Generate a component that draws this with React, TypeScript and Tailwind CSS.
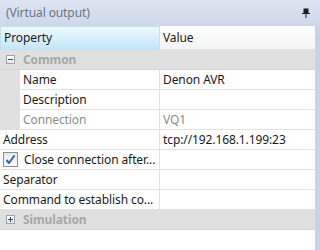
const font = { fontFamily: '"Noto Sans", "Open Sans", sans-serif' };

type Row = {
  name: string;
  value?: string;
  sub?: boolean;
  dim?: boolean;
  check?: boolean;
};

const commonRows: Row[] = [
  { name: "Name", value: "Denon AVR" },
  { name: "Description" },
  { name: "Connection", value: "VQ1", dim: true },
];

const rootRows: Row[] = [
  { name: "Address", value: "tcp://192.168.1.199:23" },
  { name: "Close connection after...", check: true },
  { name: "Separator" },
  { name: "Command to establish co..." },
];

function PinIcon() {
  return (
    <svg width="8" height="10" viewBox="0 0 8 10" className="text-[#1e1e1e]">
      <rect x="1.5" y="0.5" width="5" height="5" fill="currentColor" />
      <rect x="0" y="5" width="8" height="1" fill="currentColor" />
      <rect x="3.5" y="6" width="1" height="4" fill="currentColor" />
    </svg>
  );
}

function ExpandBox({ open }: { open: boolean }) {
  return (
    <span className="flex h-[9px] w-[9px] items-center justify-center border border-[#9fa4ab] bg-gradient-to-b from-white to-[#e6e6e6]">
      <svg width="7" height="7" viewBox="0 0 7 7">
        <rect x="1" y="3" width="5" height="1" fill="#3c4a66" />
        {!open && <rect x="3" y="1" width="1" height="5" fill="#3c4a66" />}
      </svg>
    </span>
  );
}

function CheckBox() {
  return (
    <span className="flex h-[15px] w-[15px] items-center justify-center border border-[#8e8f8f] bg-gradient-to-b from-[#e9e9e9] to-white">
      <svg width="11" height="11" viewBox="0 0 11 11">
        <path
          d="M1.5 6 L4 9 L9.5 1.5"
          fill="none"
          stroke="#3163a5"
          strokeWidth="2"
          strokeLinejoin="round"
        />
      </svg>
    </span>
  );
}

function PropRow({ row }: { row: Row }) {
  const tone = row.dim ? "text-[#8c8c8c]" : "text-[#1b1b1b]";
  return (
    <div className="flex h-[20px]">
      {row.sub && <div className="w-[20px] bg-[#e0e0e0]" />}
      <div
        className={`flex items-center border-b border-r border-[#e2e2e2] pl-[3px] ${
          row.sub ? "w-[140px]" : "w-[160px]"
        } ${tone}`}
      >
        {row.check && (
          <span className="mr-[6px]">
            <CheckBox />
          </span>
        )}
        <span className="whitespace-nowrap">{row.name}</span>
      </div>
      <div className={`flex flex-1 items-center border-b border-[#e2e2e2] pl-[3px] ${tone}`}>
        {row.value}
      </div>
    </div>
  );
}

function Category({ label, open }: { label: string; open: boolean }) {
  return (
    <div className="flex h-[20px] items-center border-b border-[#d4d4d4] bg-[#e0e0e0]">
      <span className="ml-[6px] mr-[8px]">
        <ExpandBox open={open} />
      </span>
      <span className="font-bold text-[#a8a8a8]">{label}</span>
    </div>
  );
}

export default function App() {
  return (
    <div
      className="h-[250px] w-[320px] overflow-hidden bg-white text-[12px] tracking-[-0.1px]"
      style={font}
    >
      <div className="flex h-[26px] items-center justify-between bg-gradient-to-b from-[#dde5f1] to-[#cdd8e9] pl-[6px] pr-[10px] text-[#6b7586]">
        <span>(Virtual output)</span>
        <PinIcon />
      </div>
      <div className="flex h-[224px]">
        <div className="flex-1 bg-white">
          <div className="flex h-[24px]">
            <div className="flex w-[160px] items-center border border-[#bde3f7] bg-gradient-to-b from-[#eef8fe] to-[#c4e6f8] pl-[3px] text-[#1b1b1b]">
              Property
            </div>
            <div className="flex flex-1 items-center border-b border-[#e2e2e2] bg-gradient-to-b from-white to-[#f4f4f4] pl-[3px] text-[#1b1b1b]">
              Value
            </div>
          </div>
          <Category label="Common" open />
          {commonRows.map((r) => (
            <PropRow key={r.name} row={{ ...r, sub: true }} />
          ))}
          {rootRows.map((r) => (
            <PropRow key={r.name} row={r} />
          ))}
          <Category label="Simulation" open={false} />
        </div>
        <div className="w-[5px] bg-[#c8d3e9]" />
      </div>
    </div>
  );
}
